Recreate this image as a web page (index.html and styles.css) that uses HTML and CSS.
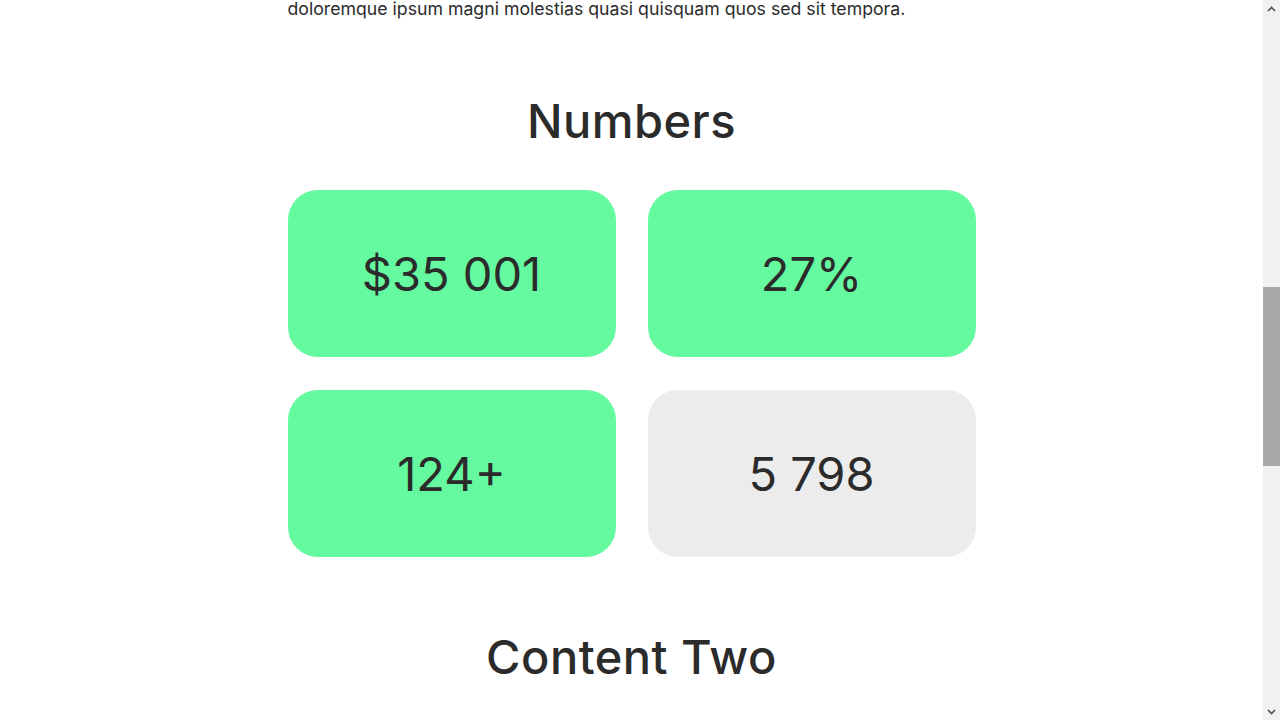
FILE: index.html
```html
<!DOCTYPE html>
<html lang="en">
<head>
<meta charset="utf-8">
<title>Numbers</title>
<link rel="stylesheet" href="styles.css">
</head>
<body>
<div class="page">
  <main class="container">
    <p class="lead">doloremque ipsum magni molestias quasi quisquam quos sed sit tempora.</p>
    <section class="numbers">
      <h2 class="title">Numbers</h2>
      <div class="grid">
        <div class="card card-green">$35 001</div>
        <div class="card card-green">27%</div>
        <div class="card card-green">124+</div>
        <div class="card card-gray">5 798</div>
      </div>
    </section>
    <section class="content-two">
      <h2 class="title">Content Two</h2>
    </section>
  </main>
  <div class="scrollbar">
    <div class="arrow arrow-up">
      <svg width="9" height="6" viewBox="0 0 9 6"><path d="M1 5 L4.5 1.5 L8 5" fill="none" stroke="#505050" stroke-width="1.6"/></svg>
    </div>
    <div class="track">
      <div class="thumb"></div>
    </div>
    <div class="arrow arrow-down">
      <svg width="9" height="6" viewBox="0 0 9 6"><path d="M1 1 L4.5 4.5 L8 1" fill="none" stroke="#505050" stroke-width="1.6"/></svg>
    </div>
  </div>
</div>
</body>
</html>
```

FILE: styles.css
```css
html, body {
  margin: 0;
  padding: 0;
  height: 100%;
  overflow: hidden;
  background: #ffffff;
}

body {
  font-family: "Inter", "Noto Sans", "Liberation Sans", sans-serif;
  color: #2b2b2b;
}

.page {
  display: flex;
  height: 720px;
}

.container {
  width: 688px;
  margin: 0 auto;
  flex: none;
}

.lead {
  margin: -4px 0 0;
  font-size: 17.7px;
  line-height: 26px;
}

.title {
  margin: 0;
  text-align: center;
  font-size: 47px;
  font-weight: 500;
  letter-spacing: 0.5px;
}

.numbers .title {
  margin-top: 71px;
  line-height: 56px;
}

.grid {
  margin-top: 41px;
  display: grid;
  grid-template-columns: 1fr 1fr;
  column-gap: 32px;
  row-gap: 33px;
}

.card {
  height: 167px;
  border-radius: 30px;
  display: flex;
  align-items: center;
  justify-content: center;
  font-size: 47px;
  font-weight: 400;
}

.card-green { background: #65f9a0; }
.card-gray { background: #ececec; }

.content-two .title {
  margin-top: 72px;
  line-height: 56px;
}

.scrollbar {
  width: 17px;
  flex: none;
  background: #f1f1f1;
  display: flex;
  flex-direction: column;
}

.arrow {
  height: 17px;
  display: flex;
  align-items: center;
  justify-content: center;
}

.track {
  flex: 1;
  padding-top: 270px;
}

.thumb {
  height: 179px;
  background: #a8a8a8;
}
```
